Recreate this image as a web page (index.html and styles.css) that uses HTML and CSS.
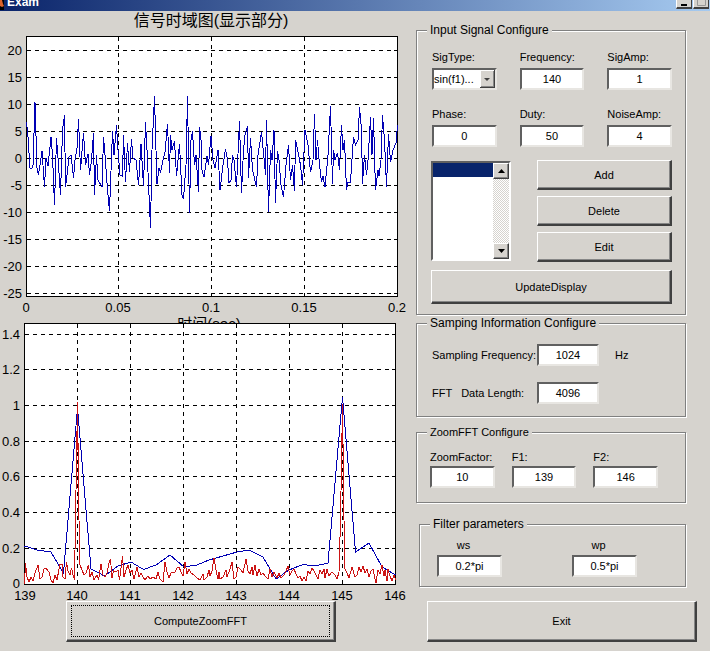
FILE: index.html
```html
<!DOCTYPE html>
<html lang="zh-CN">
<head>
<meta charset="utf-8">
<title>Exam</title>
<link rel="stylesheet" href="styles.css">
</head>
<body>
<header class="titlebar">
  <svg class="app-icon" width="5" height="10" viewBox="0 0 5 10" aria-hidden="true"><path d="M0 0h4v10H0z" fill="#000"/><path d="M0 0h2l1 4 1 2-2 1-2-1z" fill="#d8622a"/></svg>
  <span class="caption">Exam</span>
  <button class="win-button" aria-label="Minimize"><svg width="6" height="2" viewBox="0 0 6 2"><path d="M0 0h6v2H0z"/></svg></button>
  <button class="win-button" aria-label="Maximize" disabled><svg width="9" height="6" viewBox="0 0 9 6"><path d="M.5 0v5.500h8V0" fill="none" stroke="#999"/></svg></button>
</header>
<main class="window">
  <section class="plots">
    <svg class="plot" viewBox="0 11 406 312" role="img" aria-label="信号时域图">
      <rect class="area" x="26.500" y="36.500" width="371" height="260"/>
      <path class="grid" d="M27 50.500H397M27 77.500H397M27 104.500H397M27 131.500H397M27 158.500H397M27 185.500H397M27 212.500H397M27 239.500H397M27 266.500H397M27 293.500H397M118.500 37V296M211.500 37V296M304.500 37V296"/>
      <path class="frame" d="M27 50.500h3M27 77.500h3M27 104.500h3M27 131.500h3M27 158.500h3M27 185.500h3M27 212.500h3M27 239.500h3M27 266.500h3M27 293.500h3M397 50.500h-3M397 77.500h-3M397 104.500h-3M397 131.500h-3M397 158.500h-3M397 185.500h-3M397 212.500h-3M397 239.500h-3M397 266.500h-3M397 293.500h-3"/>
      <polyline class="blue" points="26.5,122 28,137 30,168 32,168 33,165 35,102 37,168 38.5,175 42,151 44.5,187 46,158 48,166 51,137 52.5,155 54.5,205 56.5,138 58,158 60.5,195 62.5,130 64.5,115 65.5,187 67,175 69,157 71,155 73.5,178 75,160 77,148 78.5,119 80.5,170 83.5,133 85.5,165 88,154 89.5,175 91.5,160 93.5,133 94.5,195 96.5,155 98,180 102,187 103.5,137 105,155 107.5,190 109.5,211 112.5,131 114,155 116.5,125 118,150 120,175 122.5,176 123.5,135 125.5,182 127.5,143 129.5,172 131.5,139 133,158 136,160 138.5,185 141,144 143.5,186 145.5,122 147,150 150.5,228 152,150 154.5,96 156,150 157,184 159,168 160.5,173 163,160 165,152 167.5,124 169.5,173 170.5,135 172,150 174.5,141 176.5,176 179.5,144 182,195 183.5,199 186,165 187.5,96 189.5,213 191,140 192.5,131 194.5,165 196,155 198.5,192 199.5,127 201,140 202,170 204,177 207,156 208.5,165 211,136 213,160 215,168 218,150 220,190 223,165 225.5,149 227.5,160 229,183 231,180 232.5,155 234,160 236.5,187 239.5,121 241.5,193 243.5,150 245,135 247.5,126 248.5,178 250.5,138 252.5,170 256.5,187 258,155 261.5,132 264,158 265.5,175 266.5,120 268.5,212 270.5,150 272,160 274,130 275.5,203 277.5,151 279,160 281,185 283.5,197 286,165 288.5,145 290.5,180 292.5,165 294.5,191 295.5,140 298,152 300.5,165 302.5,185 305,130 308,145 310.5,172 313,160 314.5,114 316,160 317.5,140 319.5,165 321.5,182 323,176 325,187 328,155 330.5,106 332.5,184 333.5,150 335,160 337.5,153 339.5,170 341.5,125 343,150 344.5,140 346.5,190 348,182 350.5,182 353.5,137 355.5,145 358,140 359.5,107 361.5,130 362.5,184 364.5,155 366.5,175 368,160 370.5,117 372,155 373.5,118 375.5,190 378,170 379,176 381,160 382.5,115 384.5,140 386.5,187 388.5,134 390.5,162 393,150 396,143 397.5,125"/>
      <text class="title" x="211" y="26">信号时域图(显示部分)</text>
      <g class="y-axis">
        <text x="22" y="55">20</text><text x="22" y="82">15</text><text x="22" y="109">10</text><text x="22" y="136">5</text><text x="22" y="163">0</text><text x="22" y="190">-5</text><text x="22" y="217">-10</text><text x="22" y="244">-15</text><text x="22" y="271">-20</text><text x="22" y="298">-25</text>
      </g>
      <g class="x-axis">
        <text x="26" y="312">0</text><text x="118" y="312">0.05</text><text x="211" y="312">0.1</text><text x="304" y="312">0.15</text><text x="397" y="312">0.2</text>
      </g>
      <text class="x-title" x="209" y="329">时间(sec)</text>
    </svg>
    <svg class="plot" viewBox="0 323 406 278" role="img" aria-label="ZoomFFT">
      <rect class="area" x="24.500" y="323.500" width="371" height="261"/>
      <path class="grid" d="M25 334.500H395M25 369.500H395M25 405.500H395M25 441.500H395M25 476.500H395M25 512.500H395M25 548.500H395M77.500 324V584M130.500 324V584M183.500 324V584M236.500 324V584M289.500 324V584M342.500 324V584"/>
      <path class="frame" d="M25 334.500h3M25 369.500h3M25 405.500h3M25 441.500h3M25 476.500h3M25 512.500h3M25 548.500h3M395 334.500h-3M395 369.500h-3M395 405.500h-3M395 441.500h-3M395 476.500h-3M395 512.500h-3M395 548.500h-3M77.500 324v4M130.500 324v4M183.500 324v4M236.500 324v4M289.500 324v4M342.500 324v4M77.500 584v-4M130.500 584v-4M183.500 584v-4M236.500 584v-4M289.500 584v-4M342.500 584v-4"/>
      <polyline class="blue" points="24.5,546 37,550 51,552 63.5,573 77.5,408 91,569 104.5,576 118,566 131,562 143.5,569.5 156,565 170,555 184,567 197,565 209,560 223,556 237,552 249,550 263,557 276,579 289,570 303,564.5 315,566 328,563 342.500,397 355.5,552 369,543 382,567 395.5,575"/>
      <polyline class="red" points="24.5,584 25.5,563 27,577 29,582 31,577 33,581 35,573 38,565 40,579 42,577 44,569 46,568 49,572 51,580 53,583 55,575 57,580 60,564 62,564 63,577 65,579 66.5,562 68,571 70,575 71.5,568 73,575 74.5,580 75.5,520 77.5,402 79,520 80,565 82,570 84,575 86,573 88.5,565 90,577 92,572 94,580 97,575 98.5,580 101,564 103,575 105,577 107,573 109,563 110.5,559 112,578 113.5,571 116,572 118,570 119.5,580 122.5,556 124,577 126,570 128,565 130,573 132,570 134,579 137,567 139,577 141,573 143,577 145,580 148,576 150,579 153,577 156,579 158,572 160,579 163,582 165,562 167,572 169,578 171,573 175,572 177,568 179,567 181,572 183,576 185,562 187,574 189,569 191,573 194,575 197,578 200,580 203,574 204,580 207,577 209,570 210,576 212,571 214,558 216,570 218,579 219,572 220,579 223,577 226,570 227,577 230,569 232,562 234,579 236,577 238,567 241,570 243,573 246,559 248,571 250,574 252,567 253,575 255,565 257,576 259,569 261,575 263,573 266,577 268,579 270,569 272,577 274,572 277,578 279,573 281,578 284,575 286,571 288,566 290,575 292,571 294,569 296,574 298,578 300,576 302,581 304,577 306,581 308,571 310,574 312,568 314,571 316,575 318,579 320,570 322,574 324,569 325,578 327,569 329,576 332,572 335,575 337,579 339,572 340.5,520 342.5,404 344,520 345,569 347,573 349,578 352,567 355,577 357,575 359,567 361,572 363,566 365,573 367,569 369,577 371,571 373,569 375,579 376,583 378,570 380,574 382,565 384,576 385,570 387,581 388,569 390,576 392,581 394,575 395.5,580"/>
      <path class="red" d="M77.500 402V450M342.500 404V445"/>
      <g class="y-axis">
        <text x="20" y="339">1.4</text><text x="20" y="374">1.2</text><text x="20" y="410">1</text><text x="20" y="446">0.8</text><text x="20" y="481">0.6</text><text x="20" y="517">0.4</text><text x="20" y="553">0.2</text><text x="20" y="588">0</text>
      </g>
      <g class="x-axis">
        <text x="25" y="600">139</text><text x="77" y="600">140</text><text x="130" y="600">141</text><text x="183" y="600">142</text><text x="236" y="600">143</text><text x="289" y="600">144</text><text x="342" y="600">145</text><text x="395" y="600">146</text>
      </g>
    </svg>
    <button class="button compute"><span class="focus">ComputeZoomFFT</span></button>
  </section>

  <section class="controls">
    <fieldset class="group signal">
      <legend>Input Signal Configure</legend>
      <div class="fields">
        <div class="field"><label for="sigtype">SigType:</label><select id="sigtype" class="box"><option>sin(f1)...</option></select></div>
        <div class="field"><label for="freq">Frequency:</label><input id="freq" class="box" value="140"></div>
        <div class="field"><label for="sigamp">SigAmp:</label><input id="sigamp" class="box" value="1"></div>
        <div class="field"><label for="phase">Phase:</label><input id="phase" class="box" value="0"></div>
        <div class="field"><label for="duty">Duty:</label><input id="duty" class="box" value="50"></div>
        <div class="field"><label for="noise">NoiseAmp:</label><input id="noise" class="box" value="4"></div>
      </div>
      <div class="list-row">
        <div class="listbox">
          <select class="list" size="5" aria-label="Signals"><option class="chosen"></option></select>
          <div class="scrollbar">
            <button class="scroll-button" aria-label="Scroll up"><svg width="7" height="4" viewBox="0 0 7 4"><path d="M3.500 0 7 4H0z"/></svg></button>
            <button class="scroll-button" aria-label="Scroll down"><svg width="7" height="4" viewBox="0 0 7 4"><path d="M0 0h7L3.500 4z"/></svg></button>
          </div>
        </div>
        <div class="actions">
          <button class="button">Add</button>
          <button class="button">Delete</button>
          <button class="button">Edit</button>
        </div>
      </div>
      <button class="button update">UpdateDisplay</button>
    </fieldset>

    <fieldset class="group sampling">
      <legend>Samping Information Configure</legend>
      <div class="sampling-grid">
        <label for="fs">Sampling Frequency:</label><input id="fs" class="box" value="1024"><span class="unit">Hz</span>
        <label for="len"><span class="prefix">FFT</span>Data Length:</label><input id="len" class="box" value="4096">
      </div>
    </fieldset>

    <fieldset class="group zoom">
      <legend>ZoomFFT Configure</legend>
      <div class="zoom-grid">
        <div class="field"><label for="factor">ZoomFactor:</label><input id="factor" class="box" value="10"></div>
        <div class="field"><label for="f1">F1:</label><input id="f1" class="box" value="139"></div>
        <div class="field"><label for="f2">F2:</label><input id="f2" class="box" value="146"></div>
      </div>
    </fieldset>

    <fieldset class="group filter">
      <legend>Filter parameters</legend>
      <div class="filter-grid">
        <div class="field"><label for="ws">ws</label><input id="ws" class="box" value="0.2*pi"></div>
        <div class="field"><label for="wp">wp</label><input id="wp" class="box" value="0.5*pi"></div>
      </div>
    </fieldset>

    <button class="button exit">Exit</button>
  </section>
</main>
</body>
</html>
```

FILE: styles.css
```css
* { box-sizing: border-box; }

body {
  margin: 0;
  min-height: 100vh;
  background: #d6d3ce;
  color: #000;
  font: 11px/14px "Liberation Sans", "Noto Sans CJK SC", sans-serif;
}

button, input, select { font: inherit; color: inherit; border-radius: 0; }

/* Title bar */
.titlebar {
  display: flex;
  height: 11px;
  padding-right: 1px;
  overflow: hidden;
  background: linear-gradient(90deg, #0a246a, #a6caf0);
}
.app-icon { flex: none; }
.caption {
  flex: 1;
  margin-top: -5px;
  padding-left: 2px;
  color: #fff;
  font-size: 12px;
  font-weight: bold;
}
.win-button {
  display: flex;
  align-items: flex-end;
  justify-content: center;
  width: 16px;
  height: 9px;
  margin-left: 1px;
  padding: 0 0 1px;
  border: 1px solid #404040;
  border-width: 0 1px 2px;
  border-left-color: #fff;
  background: #d6d3ce;
}

.window {
  display: grid;
  grid-template-columns: 406fr 304fr;
  align-items: start;
}

/* Plots */
.plots { display: flex; flex-direction: column; }
.plot { display: block; width: 100%; overflow: hidden; }
.area { fill: #fff; stroke: #000; shape-rendering: crispEdges; }
.grid { fill: none; stroke: #000; stroke-dasharray: 4 4; shape-rendering: crispEdges; }
.frame { fill: none; stroke: #000; shape-rendering: crispEdges; }
.blue { fill: none; stroke: #0000b4; shape-rendering: crispEdges; }
.red { fill: none; stroke: #cc1414; shape-rendering: crispEdges; }
.y-axis { font-size: 13px; text-anchor: end; }
.x-axis { font-size: 13px; text-anchor: middle; }
.title { font-size: 16px; text-anchor: middle; }
.x-title { font-size: 15px; text-anchor: middle; }

/* Raised buttons */
.button {
  display: block;
  height: 30px;
  padding: 0;
  border: 1px solid;
  border-color: #fff #404040 #404040 #fff;
  border-width: 1px 2px 2px 1px;
  background: #d6d3ce;
  box-shadow: inset -1px -1px #868686;
}
.compute { height: 41px; margin: 0 70px 0 66px; padding: 3px 4px; }
.focus {
  display: flex;
  height: 100%;
  align-items: center;
  justify-content: center;
  border: 1px dotted #000;
}
.exit { height: 41px; margin: 14px 13px 0 11px; }

/* Group boxes */
.controls { display: flex; flex-direction: column; padding: 12px 0 0 10px; }
.group {
  min-width: 0;
  margin: 0 24px 0 0;
  padding: 0 13px 0 15px;
  border: 1px solid #808080;
  box-shadow: 1px 1px #fff, inset 1px 1px #fff;
}
legend {
  height: 14px;
  margin-left: -5px;
  padding: 0 3px;
  background: #d6d3ce;
  font-size: 12px;
}
.signal { padding: 13px 13px 10px 14px; }
.signal legend { margin-left: -4px; }
.sampling { margin-top: 1px; padding-top: 14px; padding-bottom: 12px; }
.zoom { margin-top: 8px; padding: 11px 27px 14px 13px; }
.zoom legend { margin-left: -3px; font-size: 11px; }
.filter { margin-top: 14px; margin-left: 3px; padding: 7px 48px 9px 17px; }
.filter legend { margin-left: -7px; }

.field { display: flex; flex-direction: column; gap: 4px; min-width: 0; }
.field label { white-space: nowrap; }

.box {
  width: 100%;
  height: 22px;
  padding: 0;
  border: 2px solid;
  border-color: #606060 #e8e6e2 #e8e6e2 #606060;
  background: #fff;
  outline: 0;
  text-align: center;
}
select.box {
  appearance: none;
  text-align: left;
  background: #fff url("data:image/svg+xml,%3Csvg xmlns='http://www.w3.org/2000/svg' width='15' height='18'%3E%3Cpath fill='%23404040' d='M0 0h15v18H0z'/%3E%3Cpath fill='%23fff' d='M0 0h14v17H0z'/%3E%3Cpath fill='%23868686' d='M1 1h13v16H1z'/%3E%3Cpath fill='%23d6d3ce' d='M1 1h12v15H1z'/%3E%3Cpath fill='%23404040' d='M4 8h6L7 11z'/%3E%3C/svg%3E") right center no-repeat;
}

.fields { display: grid; grid-template-columns: repeat(3, 1fr); gap: 17px 23px; padding-left: 1px; }

.list-row {
  display: grid;
  grid-template-columns: 80px 1fr;
  gap: 26px;
  margin-top: 13px;
}
.listbox {
  display: flex;
  height: 100px;
  margin-top: 1px;
  border: 2px solid;
  border-color: #606060 #fff #fff #606060;
  background: #fff;
}
.list {
  flex: 1;
  min-width: 0;
  height: 100%;
  padding: 0;
  border: 0;
  outline: 0;
  overflow: hidden;
  background: #fff;
}
.list option { min-height: 14px; height: 14px; padding: 0; }
.chosen { background: #08246b; }
.scrollbar {
  display: flex;
  flex-direction: column;
  justify-content: space-between;
  width: 16px;
  background: repeating-conic-gradient(#fff 0 25%, #d6d3ce 0 50%) 0 0 / 2px 2px;
}
.scroll-button {
  display: flex;
  align-items: center;
  justify-content: center;
  height: 16px;
  padding: 0;
  border: 1px solid;
  border-color: #fff #404040 #404040 #fff;
  background: #d6d3ce;
  box-shadow: inset -1px -1px #868686;
}
.actions { display: flex; flex-direction: column; gap: 6px; }
.update { width: 100%; height: 34px; margin-top: 8px; }

.sampling-grid {
  display: grid;
  grid-template-columns: 105px 62px 1fr;
  gap: 16px 0;
  align-items: center;
}
.sampling-grid label { white-space: nowrap; }
.sampling-grid label[for="len"] { grid-column: 1; }
.prefix { margin-right: 9px; }
.unit { padding-left: 16px; }

.zoom-grid { display: grid; grid-template-columns: repeat(3, 1fr); gap: 17px; }
.zoom-grid .field { gap: 2px; }

.filter-grid {
  display: grid;
  grid-template-columns: 65px 65px;
  justify-content: space-between;
}
.filter-grid .field { gap: 3px; }
.filter-grid label { padding: 0 12px 0 0; text-align: center; }
```
